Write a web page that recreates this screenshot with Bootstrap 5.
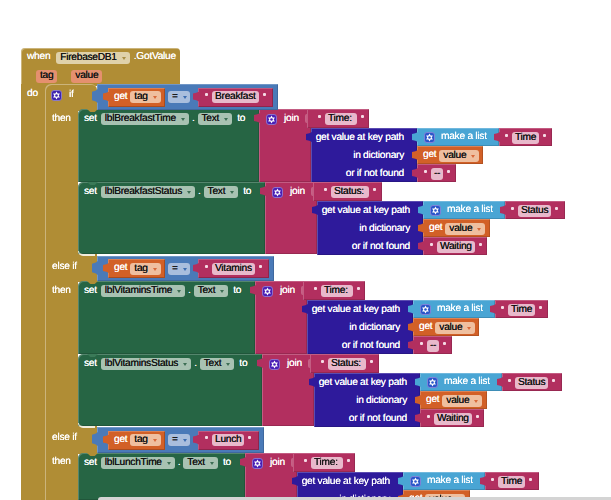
<!DOCTYPE html>
<html lang="en">
<head>
<meta charset="utf-8">
<title>Blocks</title>
<link rel="stylesheet" href="https://cdn.jsdelivr.net/npm/bootstrap@5.3.0/dist/css/bootstrap.min.css">
<style>
html,body{margin:0;background:#fff;overflow:hidden}
.stage{position:relative;width:611px;height:500px;overflow:hidden;font:10.2px/1 "Liberation Sans",Arial,sans-serif;letter-spacing:-.27px;text-rendering:geometricPrecision;filter:blur(.4px)}
.blk{position:absolute;box-shadow:inset 1px 1px 0 rgba(255,255,255,.22),inset -1px -1px 0 rgba(0,0,0,.14)}
.flat{box-shadow:none}
.leftline{box-shadow:inset 1px 0 0 rgba(255,255,255,.35)}
.topline{box-shadow:inset 1px 1px 0 rgba(255,255,255,.35)}
.inl{position:relative;flex:none;height:19px;box-shadow:inset 1px 1px 0 rgba(255,255,255,.2),inset -1px -1px 0 rgba(0,0,0,.2)}
.c-gold{background:#b08d35}.c-green{background:#266544}.c-pink{background:#b22f5f}
.c-blue{background:#4a7ab8}.c-orange{background:#d26027}.c-navy{background:#2e1a9b}.c-sky{background:#49a5d4}
.lab{color:#fff;white-space:nowrap;flex:none;text-shadow:0 0 .6px #fff}
.fld{height:12px;border-radius:3px;padding:1px 4px 0;color:#111;white-space:pre;flex:none;text-shadow:0 0 .4px #222}
.fld i{display:inline-block;width:0;height:0;margin-left:5px;border:2px solid transparent;border-top:3px solid #fff;border-bottom:0}
.f-green{background:#a8c2b2}.f-gold{background:#dfd1aa}.f-orange{background:#efbf9f}.f-blue{background:#a9bedd;width:22px}
.f-pink{background:#e8b9cb;padding:1px 3px 0}
.f-salmon{background:#e5906f;height:13px}
.f-green i{border-top-color:#3d6e54}.f-gold i{border-top-color:#a98d45}.f-orange i{border-top-color:#d8693a}.f-blue i{border-top-color:#3c6cb0}
.qt{width:3px;height:3px;background:#f5dbe5;flex:none;margin-top:-5px;border-radius:1px}
.tb{position:absolute;left:-5px;top:4px;width:6px;height:10px;background:inherit;clip-path:polygon(100% 0,55% 12%,0 20%,0 80%,55% 88%,100% 100%)}
.ntc{position:absolute;left:9px;top:0;width:11px;height:3px;clip-path:polygon(0 0,100% 0,70% 100%,30% 100%)}
.edge{position:absolute;left:0;bottom:-2px;width:17px;height:5px;border-left:1px solid #e9e2cd;border-bottom:2px solid #f1ecdd;border-bottom-left-radius:6px}
.inner-tab{position:absolute;width:4px;height:9px;background:#c85c83;border-radius:2px 0 0 2px;box-shadow:-1px 0 0 rgba(255,255,255,.25)}
.navytext{padding:1px 13px 0 0;line-height:18px}
.gear{flex:none;display:block}
.mask{position:absolute;left:98px;top:497px;right:0;height:3px;background:#d4d4d4;border-top-left-radius:3px}
</style>
</head>
<body>
<main class="stage" id="stage" aria-label="Block editor canvas"></main>
<script>
const stage=document.getElementById('stage');
const gear=(fill)=>`<svg class="gear" width="11" height="11" viewBox="0 0 11 11"><rect x=".5" y=".5" width="10" height="10" rx="2.5" fill="${fill}" stroke="#8f83dc" stroke-width=".8"/><path d="M5.5 1.6 6.6 3.6 8.9 3.6 7.7 5.5 8.9 7.4 6.6 7.4 5.5 9.4 4.4 7.4 2.1 7.4 3.3 5.5 2.1 3.6 4.4 3.6Z" fill="#fff"/><circle cx="5.5" cy="5.5" r="1.3" fill="${fill}"/></svg>`;
const lab=t=>`<span class="lab">${t}</span>`;
const fld=(t,k)=>`<span class="fld f-${k} d-inline-flex align-items-center">${t}<i></i></span>`;
const pill=(t,k)=>`<span class="fld f-${k} d-inline-flex align-items-center">${t}</span>`;
const str=t=>`<span class="qt"></span>${pill(t,'pink')}<span class="qt"></span>`;
function box(x,y,w,h,c,html='',cls=''){
  const d=document.createElement('div');
  d.className=`blk c-${c} ${cls}`;
  Object.assign(d.style,{left:x+'px',top:y+'px',width:w+'px',height:h+'px'});
  d.innerHTML=html;stage.appendChild(d);return d;
}
const flow=(h,pl,gap,html)=>`<div class="d-flex align-items-center" style="height:${h}px;padding-left:${pl}px;column-gap:${gap}px">${html}</div>`;
const getOr=`<div class="inl c-orange d-flex align-items-center" style="width:57px;padding-left:6px;column-gap:3px"><span class="tb"></span>${lab('get')}${fld('tag','orange')}</div>`;

/* gold event block */
box(21,48,159,38,'gold',flow(19,6,6,`${lab('when')}${fld('FirebaseDB1','gold')}<span class="lab" style="margin-left:-2px">.GotValue</span>`)+flow(18,15,14,`${pill('tag','salmon')}${pill('value','salmon')}`),'topline rounded-top-1');
box(21,84,26,416,'gold',`<div style="padding:5px 0 0 6px">${lab('do')}</div>`,'flat');
box(45,84,52,27,'gold',`<div class="d-flex align-items-center" style="height:20px;padding:3px 0 0 6px;column-gap:7px">${gear('#3d23ad')}${lab('if')}</div>`,'topline rounded-top-2');
box(45,110,33,390,'gold','','leftline');
box(78,254,19,28,'gold','','flat');
box(78,426,19,28,'gold','','flat');

function stack(y0,W,name,strTop,topW,listT,listW,third,thirdW,getW,opts){
  const x0=78+W, cut=opts.cut, H=cut?47:(opts.last?72:73);
  const g=box(78,y0,W,H,'green',flow(20,6,3,`<span class="lab" style="margin-right:1px">set</span>${fld(name,'green')}${lab('.')}${fld('Text','green')}<span class="lab" style="margin-left:2px">to</span>`)+`<span class="ntc" style="background:${opts.notch}"></span>`+(opts.last?'<span class="edge"></span>':''));
  g.style.borderTopLeftRadius='5px';
  box(x0,y0,52,H,'pink',`<span class="tb"></span>${flow(20,7,7,gear('#4a1fb5')+lab('join'))}<span class="inner-tab" style="left:47px;top:5px"></span>`);
  box(x0+48,y0,topW-48,19,'pink',flow(20,11,4,str(strTop)));
  const lines=cut?'get value at key path<br>in dictionary':'get value at key path<br>in dictionary<br>or if not found';
  box(x0+52,y0+19,106,cut?28:54,'navy',`<span class="tb"></span><div class="lab text-end navytext">${lines}</div>`);
  box(x0+158,y0+19,82,18,'sky',`<span class="tb"></span>${flow(19,7,6,gear('#2a56c9')+lab('make a list'))}`);
  box(x0+240,y0+19,listW,18,'pink',`<span class="tb"></span>${flow(19,6,4,str(listT))}`);
  box(x0+158,y0+37,getW,cut?10:18,'orange',`<span class="tb"></span>${flow(19,6,3,lab('get')+fld('value','orange'))}`);
  if(!cut) box(x0+158,y0+55,thirdW,18,'pink',`<span class="tb"></span>${flow(19,7,4,str(third))}`);
}
const GREEN='#3b7a58',GOLD='#b08d35';
stack(109,181,'lblBreakfastTime','Time: ',110,'Time',53,'--',39,66,{notch:GOLD});
stack(182,187,'lblBreakfastStatus','Status: ',117,'Status',60,'Waiting',64,67,{notch:GREEN,last:true});
stack(281,177,'lblVitaminsTime','Time: ',110,'Time',53,'--',39,66,{notch:GOLD});
stack(354,184,'lblVitaminsStatus','Status: ',117,'Status',60,'Waiting',64,67,{notch:GREEN,last:true});
stack(453,167,'lblLunchTime','Time: ',110,'Time',54,'--',39,67,{notch:GOLD,cut:true});

function test(y,h,w,word){
  const pinkW=w-106;
  box(97,y,w,h,'blue',`<span class="tb" style="top:5px;height:14px"></span><div class="d-flex align-items-center" style="height:${h}px;padding-left:11px;column-gap:3px">${getOr}${fld('=','blue')}<div class="inl c-pink d-flex align-items-center" style="width:${pinkW}px;margin-left:5px;padding-left:7px;column-gap:4px"><span class="tb"></span>${str(word)}</div></div>`);
}
test(84,26,181,'Breakfast');
test(256,25,177,'Vitamins');
test(427,26,167,'Lunch');

/* column labels */
[['then',52,114],['else if',52,262],['then',52,286],['else if',52,433],['then',52,457]].forEach(([t,x,y])=>{
  const s=document.createElement('span');s.className='lab position-absolute';s.textContent=t;
  Object.assign(s.style,{left:x+'px',top:y+'px'});stage.appendChild(s);
});
const m=document.createElement('div');m.className='mask';stage.appendChild(m);
</script>
<script src="https://cdn.jsdelivr.net/npm/bootstrap@5.3.0/dist/js/bootstrap.bundle.min.js"></script>
</body>
</html>
